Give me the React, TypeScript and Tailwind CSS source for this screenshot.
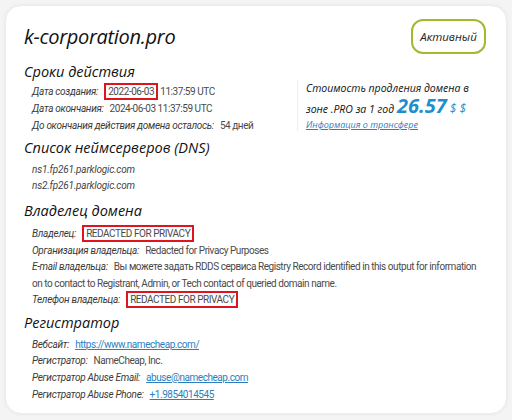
import React from 'react';

const roboto = { fontFamily: 'Roboto, "Liberation Sans", sans-serif' };
const open = { fontFamily: '"Open Sans", sans-serif' };

const Row = ({ label, children, lh = 'leading-[16.5px]' }: { label: string; children: React.ReactNode; lh?: string }) => (
  <div className={lh}>
    <span className="italic text-[#3a3a3a] tracking-[-0.3px]">{label}</span>
    <span className="ml-[6px] text-[#4a4a4a] tracking-[-0.45px]">{children}</span>
  </div>
);

const Boxed = ({ children }: { children: React.ReactNode }) => (
  <span className="border-2 border-[#e0141e] px-[2px] py-px">{children}</span>
);

const Link = ({ children }: { children: React.ReactNode }) => (
  <span className="text-[#2a7fc1] underline">{children}</span>
);

const Heading = ({ children }: { children: React.ReactNode }) => (
  <h3 className="italic text-[14.5px] text-[#111] leading-[18px]" style={open}>{children}</h3>
);

export default function App() {
  return (
    <div className="w-[512px] h-[420px] bg-[#f4f4f4] p-[5px]" style={roboto}>
      <div className="h-[409px] bg-white rounded-[16px] border border-[#ececec] shadow-[0_0_4px_rgba(0,0,0,0.06)] pl-[18px] pr-[20px] pt-[13px] text-[10px]">
        <div className="flex items-start justify-between">
          <h1 className="italic text-[20px] text-[#111] leading-[28px] mt-[4px] tracking-[-0.3px]" style={open}>k-corporation.pro</h1>
          <div className="w-[75px] h-[35px] flex items-center justify-center border-2 border-[#9ebc2c] rounded-[12px] italic text-[11.5px] text-[#222]" style={open}>Активный</div>
        </div>

        <div className="flex mt-[9px]">
          <div className="w-[273px]">
            <Heading>Сроки действия</Heading>
            <div className="pl-[8px] mt-[2px]">
              <Row lh="leading-[17px]" label="Дата создания:"><Boxed>2022-06-03</Boxed> 11:37:59 UTC</Row>
              <Row lh="leading-[17px]" label="Дата окончания:">2024-06-03 11:37:59 UTC</Row>
              <Row lh="leading-[17px]" label="До окончания действия домена осталось:">54 дней</Row>
            </div>
          </div>
          <div className="border-l border-[#eeeeee] pl-[8px] mt-[17px] h-[51px] italic text-[10.5px] text-[#111]" style={open}>
            <div className="leading-[17px]">Стоимость продления домена в</div>
            <div className="leading-[18px] flex items-baseline">
              <span>зоне .PRO за 1 год</span>
              <span className="ml-[3px] text-[20px] font-bold text-[#1e8fcd] leading-[18px]">26.57</span>
              <span className="ml-[3px] text-[12px] text-[#1e8fcd]">$ $</span>
            </div>
            <div className="leading-[13px] text-[9px] text-[#2a7fc1] underline">Информация о трансфере</div>
          </div>
        </div>

        <div className="mt-[5px]">
          <Heading>Список неймсерверов (DNS)</Heading>
          <div className="pl-[8px] mt-[5px] italic text-[#444] leading-[16px] tracking-[-0.2px]">
            <div>ns1.fp261.parklogic.com</div>
            <div>ns2.fp261.parklogic.com</div>
          </div>
        </div>

        <div className="mt-[8px]">
          <Heading>Владелец домена</Heading>
          <div className="pl-[8px] mt-[6px]">
            <Row label="Владелец:"><Boxed>REDACTED FOR PRIVACY</Boxed></Row>
            <Row label="Организация владельца:">Redacted for Privacy Purposes</Row>
            <Row label="E-mail владельца:">Вы можете задать RDDS сервиса Registry Record identified in this output for information on to contact to Registrant, Admin, or Tech contact of queried domain name.</Row>
            <Row label="Телефон владельца:"><Boxed>REDACTED FOR PRIVACY</Boxed></Row>
          </div>
        </div>

        <div className="mt-[5px]">
          <Heading>Регистратор</Heading>
          <div className="pl-[8px] mt-[5px]">
            <Row lh="leading-[16.7px]" label="Вебсайт:"><Link>https://www.namecheap.com/</Link></Row>
            <Row lh="leading-[16.7px]" label="Регистратор:">NameCheap, Inc.</Row>
            <Row lh="leading-[16.7px]" label="Регистратор Abuse Email:"><Link>abuse@namecheap.com</Link></Row>
            <Row lh="leading-[16.7px]" label="Регистратор Abuse Phone:"><Link>+1.9854014545</Link></Row>
          </div>
        </div>
      </div>
    </div>
  );
}
